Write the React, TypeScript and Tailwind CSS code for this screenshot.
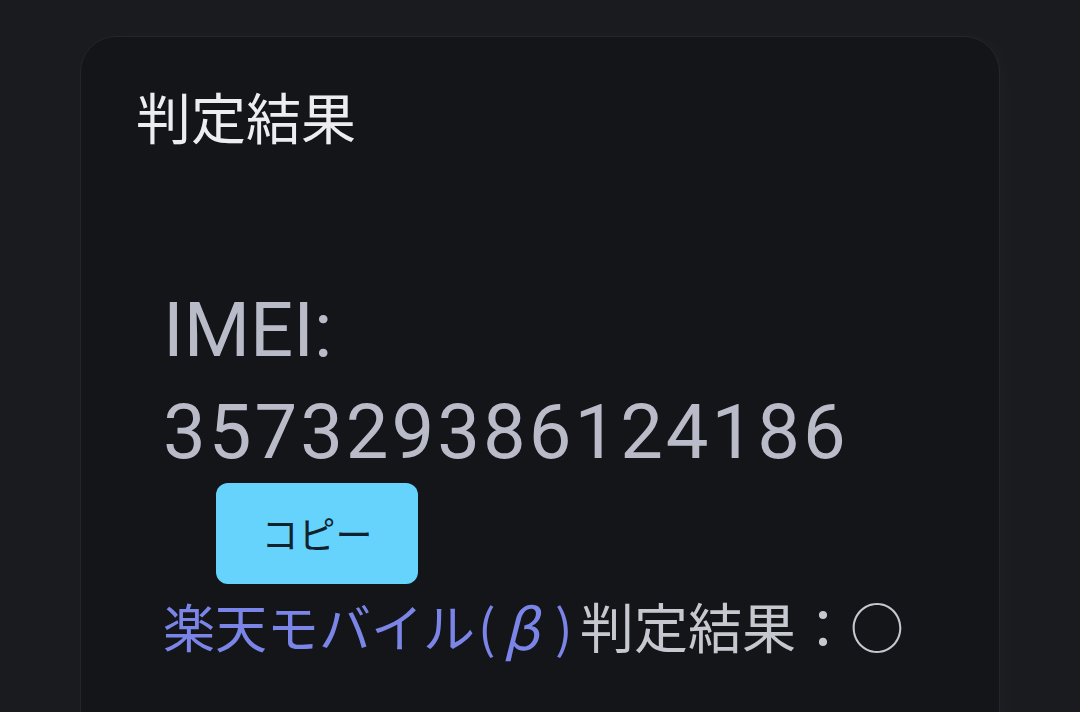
export default function App() {
  return (
    <div className="min-h-screen bg-[#1a1b1f] px-[80px] pt-[36px] overflow-hidden font-['Roboto','Noto_Sans_CJK_JP',sans-serif]">
      <div className="h-[720px] rounded-t-[36px] border border-[#25262b] bg-[#141519] px-[55px] pt-[56px] shadow-[6px_0_20px_rgba(255,255,255,0.02)]">
        {/* Title */}
        <h2 className="text-[55px] leading-[55px] text-[#ededf1]">判定結果</h2>

        {/* Result */}
        <div className="mt-[131px] pl-[27px]">
          <p className="text-[76px] leading-[102px] text-[#b9bcc8]">IMEI:</p>
          <p className="text-[76px] leading-[102px] tracking-[3px] text-[#b9bcc8]">357329386124186</p>
          <button className="ml-[53px] flex h-[101px] w-[202px] items-center justify-center rounded-[12px] bg-[#66d3fc] font-['Noto_Sans_CJK_JP',sans-serif] text-[37px] text-[#10222e]">
            コピー
          </button>
          <p className="mt-[15px] flex items-center whitespace-nowrap font-['Noto_Sans_CJK_JP',sans-serif] leading-[54px]">
            <span className="text-[52px] text-[#7b85e8]">楽天モバイル</span>
            <span className="inline-block w-[22px] pl-[3px] text-[52px] text-[#7b85e8]">(</span>
            <span className="inline-block w-[58px] pr-[10px] text-center text-[56px] italic text-[#7b85e8]">β</span>
            <span className="inline-block w-[25px] text-[52px] text-[#7b85e8]">)</span>
            <span className="text-[54px] text-[#c6c8d0]">判定結果：○</span>
          </p>
        </div>
      </div>
    </div>
  )
}
